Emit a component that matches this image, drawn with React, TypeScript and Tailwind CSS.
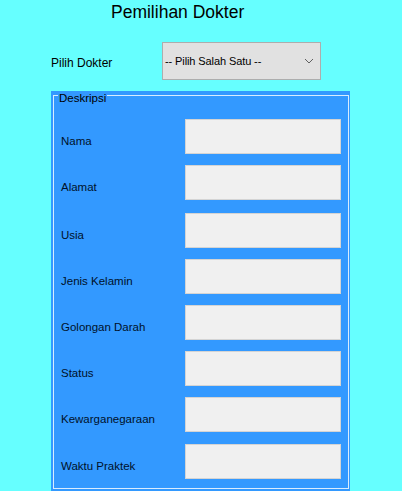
import React from "react";

const rows = [
  { label: "Nama", mt: "mt-0" },
  { label: "Alamat", mt: "mt-[11px]" },
  { label: "Usia", mt: "mt-[13px]" },
  { label: "Jenis Kelamin", mt: "mt-[11px]" },
  { label: "Golongan Darah", mt: "mt-[11px]" },
  { label: "Status", mt: "mt-[11px]" },
  { label: "Kewarganegaraan", mt: "mt-[11px]" },
  { label: "Waktu Praktek", mt: "mt-[12px]" },
];

const App = () => {
  return (
    <div className="w-[402px] h-[491px] overflow-hidden bg-[#66ffff] text-black font-['Liberation_Sans',Arial,sans-serif]">
      {/* judul */}
      <h1 className="pl-[111px] pt-[1px] text-[17.5px] leading-[22px]">Pemilihan Dokter</h1>

      {/* pilih dokter */}
      <div className="flex items-center mt-[19px] ml-[51px]">
        <span className="w-[111px] text-[12px] pt-[3px]">Pilih Dokter</span>
        <div className="flex items-center justify-between w-[159px] h-[38px] bg-[#e1e1e1] border border-[#adadad] pl-[2px] pr-[6px]">
          <span className="text-[11px] tracking-[-0.1px]">-- Pilih Salah Satu --</span>
          <svg width="10" height="6" viewBox="0 0 10 6" fill="none">
            <path d="M1 1 L5 5 L9 1" stroke="#606060" strokeWidth="1" />
          </svg>
        </div>
      </div>

      {/* deskripsi */}
      <div className="flow-root mt-[11px] ml-[51px] w-[299px] h-[400px] bg-[#3399ff]">
        <fieldset className="-mt-[4px] ml-[2px] w-[294px] h-[402px] border border-[#d8ecff] px-[7px] pt-[16px]">
          <legend className="-ml-[3px] px-[1px] pt-[6px] text-[11.5px] leading-[10px]">Deskripsi</legend>
          {rows.map((r) => (
            <div key={r.label} className={`flex items-center ${r.mt}`}>
              <span className="w-[124px] text-[11.5px] pt-[10px] text-[#00112a]">{r.label}</span>
              <div className="w-[156px] h-[35px] bg-[#f0f0f0] border border-[#d4d4d4]" />
            </div>
          ))}
        </fieldset>
      </div>
    </div>
  );
};

export default App;
